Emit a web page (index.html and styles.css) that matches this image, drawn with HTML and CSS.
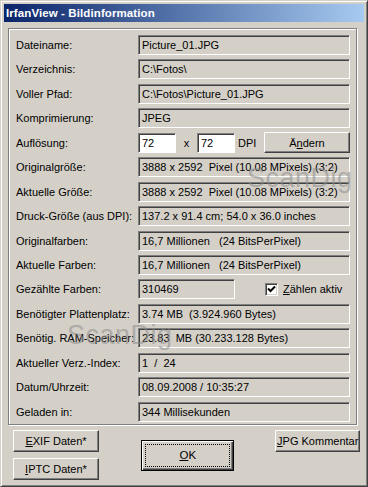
FILE: index.html
```html
<!DOCTYPE html>
<html lang="de">
<head>
<meta charset="utf-8">
<title>IrfanView - Bildinformation</title>
<link rel="stylesheet" href="styles.css">
</head>
<body>
<div class="window">
  <div class="titlebar"><span class="title">IrfanView - Bildinformation</span></div>
  <div class="client">
    <div class="group">
      <div class="grid">
        <div class="label">Dateiname:</div><div class="field">Picture_01.JPG</div>
        <div class="label">Verzeichnis:</div><div class="field">C:\Fotos\</div>
        <div class="label">Voller Pfad:</div><div class="field">C:\Fotos\Picture_01.JPG</div>
        <div class="label">Komprimierung:</div><div class="field">JPEG</div>
        <div class="label">Auflösung:</div>
        <div class="res-row">
          <div class="input">72</div>
          <span class="times">x</span>
          <div class="input">72</div>
          <span class="dpi">DPI</span>
          <div class="btn btn-change">Ä<u>n</u>dern</div>
        </div>
        <div class="label">Originalgröße:</div><div class="field">3888 x 2592  Pixel (10.08 MPixels) (3:2)</div>
        <div class="label">Aktuelle Größe:</div><div class="field">3888 x 2592  Pixel (10.08 MPixels) (3:2)</div>
        <div class="label">Druck-Größe (aus DPI):</div><div class="field">137.2 x 91.4 cm; 54.0 x 36.0 inches</div>
        <div class="label">Originalfarben:</div><div class="field">16,7 Millionen   (24 BitsPerPixel)</div>
        <div class="label">Aktuelle Farben:</div><div class="field">16,7 Millionen   (24 BitsPerPixel)</div>
        <div class="label">Gezählte Farben:</div>
        <div class="count-row">
          <div class="field field-short">310469</div>
          <div class="check">
            <span class="box"><svg width="9" height="9" viewBox="0 0 9 9"><path d="M1 3.5 L3.5 6 L8 1.5" fill="none" stroke="#000" stroke-width="2"/></svg></span>
            <span class="check-label"><u>Z</u>ählen aktiv</span>
          </div>
        </div>
        <div class="label">Benötigter Plattenplatz:</div><div class="field">3.74 MB  (3.924.960 Bytes)</div>
        <div class="label">Benötig. RAM-Speicher:</div><div class="field">23.83  MB (30.233.128 Bytes)</div>
        <div class="label">Aktueller Verz.-Index:</div><div class="field">1  /  24</div>
        <div class="label">Datum/Uhrzeit:</div><div class="field">08.09.2008 / 10:35:27</div>
        <div class="label">Geladen in:</div><div class="field">344 Millisekunden</div>
      </div>
    </div>
    <div class="actions">
      <div class="action-col">
        <div class="btn btn-side"><u>E</u>XIF Daten*</div>
        <div class="btn btn-side"><u>I</u>PTC Daten*</div>
      </div>
      <div class="btn-ok"><div class="focus"><u>O</u>K</div></div>
      <div class="btn btn-side btn-jpg"><u>J</u>PG Kommentar</div>
    </div>
    <div class="watermark wm-1">ScanDig</div>
    <div class="watermark wm-2">ScanDig</div>
  </div>
</div>
</body>
</html>
```
FILE: styles.css
```css
html, body {
  margin: 0;
  padding: 0;
  background: #d4d0c8;
}
body {
  font-family: "Liberation Sans", Arial, sans-serif;
  font-size: 11px;
  color: #000;
}
.window {
  width: 368px;
  height: 487px;
  box-sizing: border-box;
  background: #d4d0c8;
  border: 1px solid;
  border-color: #d4d0c8 #404040 #404040 #d4d0c8;
  box-shadow: inset 1px 1px 0 #ffffff, inset -1px -1px 0 #808080;
  padding: 3px;
  overflow: hidden;
}
.titlebar {
  height: 18px;
  background: linear-gradient(to right, #0a246a, #a6caf0);
  display: flex;
  align-items: center;
  padding-left: 2px;
}
.title {
  color: #fff;
  font-weight: bold;
  font-size: 11.5px;
  letter-spacing: 0.1px;
}
.client {
  position: relative;
  padding: 6px 4px 0 4px;
}
.group {
  width: 349px;
  border: 1px solid #808080;
  box-shadow: inset 1px 1px 0 #ffffff, 1px 1px 0 #ffffff;
  padding: 6px 0 2px 7px;
  box-sizing: border-box;
}
.grid {
  display: grid;
  grid-template-columns: 122px 212px;
  grid-auto-rows: 20px;
  row-gap: 4.45px;
}
.label {
  display: flex;
  align-items: center;
  white-space: nowrap;
}
.field {
  box-sizing: border-box;
  height: 20px;
  border: 1px solid;
  border-color: #808080 #ffffff #ffffff #808080;
  box-shadow: inset 1px 1px 0 #404040;
  padding: 0 0 0 3px;
  display: flex;
  align-items: center;
  white-space: pre;
  overflow: hidden;
}
.res-row, .count-row {
  display: flex;
  align-items: center;
}
.input {
  box-sizing: border-box;
  width: 38px;
  height: 20px;
  background: #fff;
  border: 1px solid;
  border-color: #808080 #ffffff #ffffff #808080;
  box-shadow: inset 1px 1px 0 #404040;
  padding-left: 3px;
  display: flex;
  align-items: center;
}
.times {
  width: 21px;
  text-align: center;
}
.dpi {
  margin-left: 3px;
}
.btn {
  box-sizing: border-box;
  border: 1px solid;
  border-color: #ffffff #404040 #404040 #ffffff;
  box-shadow: inset -1px -1px 0 #808080;
  display: flex;
  align-items: center;
  justify-content: center;
  white-space: nowrap;
}
.btn-change {
  margin-left: auto;
  width: 86px;
  height: 21px;
}
.field-short {
  width: 97px;
}
.check {
  display: flex;
  align-items: center;
  margin-left: 30px;
}
.box {
  box-sizing: border-box;
  width: 13px;
  height: 13px;
  background: #fff;
  border: 1px solid;
  border-color: #808080 #ffffff #ffffff #808080;
  box-shadow: inset 1px 1px 0 #404040, inset -1px -1px 0 #d4d0c8;
  display: flex;
  align-items: center;
  justify-content: center;
}
.box svg {
  display: block;
}
.check-label {
  margin-left: 5px;
  font-size: 11px;
}
.actions {
  display: flex;
  align-items: flex-start;
}
.action-col {
  display: flex;
  flex-direction: column;
  gap: 6px;
  margin-left: 5px;
  margin-top: 5px;
}
.btn-side {
  width: 86px;
  height: 22px;
  font-size: 11px;
}
.btn-ok {
  box-sizing: border-box;
  width: 95px;
  height: 31px;
  margin-left: 42px;
  margin-top: 15px;
  border: 1px solid #000;
  box-shadow: inset 1px 1px 0 #ffffff, inset -1px -1px 0 #404040, inset -2px -2px 0 #808080;
  padding: 3px;
  display: flex;
}
.focus {
  flex: 1;
  border: 1px dotted #000;
  display: flex;
  align-items: center;
  justify-content: center;
  font-size: 11.5px;
}
.btn-jpg {
  margin-left: 41px;
  margin-top: 5px;
}
.watermark {
  position: absolute;
  font-size: 27px;
  color: rgba(140, 140, 140, 0.55);
  pointer-events: none;
  letter-spacing: 0.5px;
}
.wm-1 {
  left: 243px;
  top: 141px;
}
.wm-2 {
  left: 63px;
  top: 298px;
}
```
